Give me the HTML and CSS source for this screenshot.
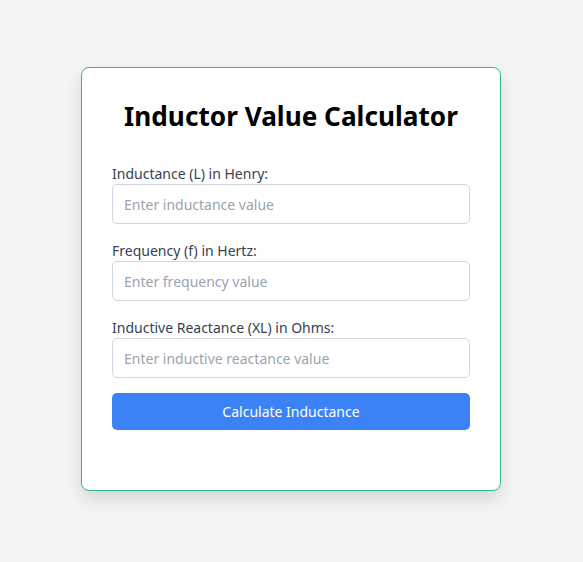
FILE: index.html
```html
<!DOCTYPE html>
<html>
<head>
<meta charset="utf-8">
<link rel="stylesheet" href="styles.css">
</head>
<body>
<div class="page">
  <div class="card">
    <h1 class="title">Inductor Value Calculator</h1>
    <div class="group">
      <label class="label">Inductance (L) in Henry:</label>
      <input class="field" type="text" placeholder="Enter inductance value">
    </div>
    <div class="group">
      <label class="label">Frequency (f) in Hertz:</label>
      <input class="field" type="text" placeholder="Enter frequency value">
    </div>
    <div class="group">
      <label class="label">Inductive Reactance (XL) in Ohms:</label>
      <input class="field" type="text" placeholder="Enter inductive reactance value">
    </div>
    <button class="btn">Calculate Inductance</button>
    <div class="result"></div>
  </div>
</div>
</body>
</html>
```
FILE: styles.css
```css
html, body {
  margin: 0;
  padding: 0;
}
body {
  background: #f3f4f6;
  font-family: "Noto Sans", "Open Sans", sans-serif;
  color: #374151;
}
.page {
  min-height: 562px;
  display: flex;
  justify-content: center;
  align-items: flex-start;
  padding: 67px 1px 0 0;
  box-sizing: border-box;
}
.card {
  width: 420px;
  box-sizing: border-box;
  background: #fff;
  border: 1px solid #34b889;
  border-radius: 8px;
  padding: 30px;
  box-shadow: 0 8px 16px rgba(0, 0, 0, 0.12);
  height: 424px;
}
.title {
  margin: 0 0 30px;
  text-align: center;
  font-size: 26.2px;
  line-height: 36px;
  font-weight: 700;
  color: #000;
}
.group {
  display: flex;
  flex-direction: column;
  margin-bottom: 17px;
}
.label {
  font-size: 14px;
  line-height: 20px;
  margin-bottom: 0;
  color: #374151;
}
.field {
  height: 40px;
  box-sizing: border-box;
  border: 1px solid #d1d5db;
  border-radius: 5px;
  padding: 0 11px;
  font-family: inherit;
  font-size: 14px;
  color: #374151;
  outline: none;
}
.field::placeholder {
  color: #9ca3af;
}
.btn {
  display: block;
  width: 100%;
  height: 37px;
  margin-top: -2px;
  border: none;
  border-radius: 5px;
  background: #3b82f6;
  color: #fff;
  font-family: inherit;
  font-size: 14px;
  cursor: pointer;
}
```
